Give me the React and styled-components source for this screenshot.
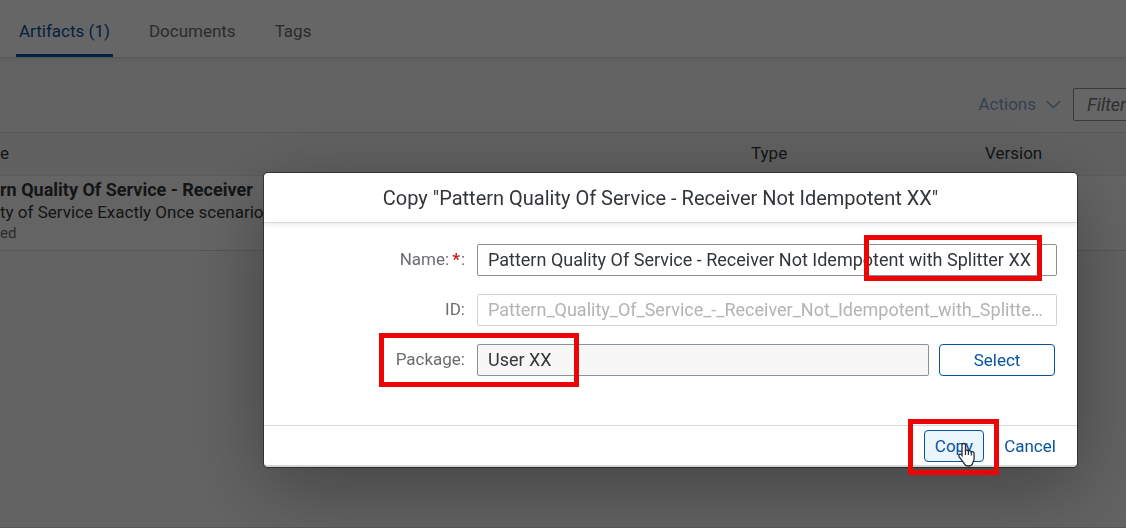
import React from "react";
import styled, { createGlobalStyle } from "styled-components";

const Global = createGlobalStyle`
  * { box-sizing: border-box; }
  html, body, #root { height: 100%; }
  body {
    margin: 0;
    overflow: hidden;
    background: #f7f7f7;
    color: #32363a;
    font-family: Roboto, "Liberation Sans", sans-serif;
    font-size: 17px;
    line-height: 22px;
  }
  input, button { font: inherit; }
`;

const Page = styled.main`
  min-height: 100%;
  overflow: hidden;
  display: flex;
  flex-direction: column;
  border-bottom: 1px solid #d9d9d9;
`;

const TabBar = styled.nav`
  display: flex;
  gap: 33px;
  padding: 0 16px;
  height: 58px;
  background: #fff;
  border-bottom: 1px solid #d9d9d9;
  box-shadow: 0 2px 4px rgba(0, 0, 0, 0.06);
`;

const Tab = styled.a`
  display: block;
  padding: 20px 3px 0;
  height: 57px;
  text-decoration: none;
  color: ${(p) => (p.$active ? "#0854a0" : "#6a6d70")};
  border-bottom: 3px solid ${(p) => (p.$active ? "#0854a0" : "transparent")};
  border-radius: 2px 2px 0 0;
`;

const Toolbar = styled.div`
  display: flex;
  justify-content: flex-end;
  align-items: center;
  height: 74px;
  padding-top: 18px;
`;

const MenuButton = styled.button`
  display: flex;
  align-items: center;
  gap: 10px;
  padding: 0;
  margin-right: 12px;
  border: 0;
  background: none;
  color: #0854a0;
  opacity: 0.5;
`;

const FilterClip = styled.div`
  width: 53px;
  height: 33px;
  overflow: hidden;
`;

const FilterInput = styled.input`
  width: 240px;
  height: 33px;
  padding: 0 13px;
  border: 1px solid #89919a;
  border-radius: 2px;
  background: #fff;
  font-size: 18px;
  &::placeholder { color: #74777a; font-style: italic; opacity: 1; }
`;

const Table = styled.table`
  width: 100%;
  table-layout: fixed;
  border-collapse: separate;
  border-spacing: 0;
  white-space: nowrap;
`;

const HeadCell = styled.th`
  width: ${(p) => p.$width};
  height: 44px;
  padding: 0 0 2px;
  text-align: left;
  font-weight: 400;
  background: #f2f2f2;
  border-top: 1px solid #d9d9d9;
  border-bottom: 1px solid #e5e5e5;
`;

const Cell = styled.td`
  height: 75px;
  padding: 0 0 4px;
  background: #fbfbfb;
  border-bottom: 1px solid #d9d9d9;
`;

const ArtifactName = styled.strong`
  display: block;
  font-size: 18px;
  font-weight: 700;
`;

const Description = styled.span`
  display: block;
`;

const Status = styled.span`
  display: block;
  font-size: 15px;
  line-height: 20px;
  color: #6a6d70;
`;

const Overlay = styled.div`
  position: fixed;
  inset: 0;
  display: flex;
  align-items: flex-start;
  padding: 173px 49px 0 264px;
  background: rgba(0, 0, 0, 0.6);
`;

const Dialog = styled.section`
  flex: 1;
  background: #fff;
  border-radius: 4px;
  border-bottom: 2px solid #d4d4d4;
  box-shadow: 0 0 0 1px rgba(0, 0, 0, 0.42), 0 20px 80px rgba(0, 0, 0, 0.35);
`;

const DialogTitle = styled.h1`
  margin: 0;
  height: 50px;
  padding: 0 20px 0 0;
  font-size: 20px;
  line-height: 50px;
  font-weight: 400;
  text-align: center;
  border-bottom: 1px solid #d9d9d9;
  box-shadow: 0 2px 4px rgba(0, 0, 0, 0.08);
`;

const Form = styled.form`
  display: flex;
  flex-direction: column;
  gap: 18px;
  padding: 21px 20px 49px 0;
`;

const Row = styled.div`
  position: relative;
  display: grid;
  grid-template-columns: 201px 1fr;
  column-gap: 12px;
`;

const Label = styled.label`
  text-align: right;
  line-height: 30px;
  color: #6a6d70;
`;

const Required = styled.span`
  color: #cc1919;
  font-weight: 700;
  padding: 0 1px 0 3px;
`;

const Field = styled.div`
  position: relative;
  display: flex;
  gap: 10px;
  padding-right: ${(p) => (p.$withButton ? "2px" : "0")};
`;

const TextInput = styled.input`
  flex: 1;
  min-width: 0;
  height: 32px;
  padding: 0 10px 2px;
  font-size: 18px;
  color: #32363a;
  background: ${(p) => (p.readOnly ? "#f7f7f7" : "#fff")};
  border: 1px solid #89919a;
  border-radius: 2px;
  text-overflow: ellipsis;
  outline: none;
  &:disabled { color: #b1b3b5; border-color: #d0d3d6; }
`;

const Footer = styled.footer`
  display: flex;
  justify-content: flex-end;
  gap: 10px;
  padding: 4px 11px 3px;
  border-top: 1px solid #d9d9d9;
`;

const Button = styled.button`
  position: relative;
  width: ${(p) => p.$width};
  height: 32px;
  padding: 0;
  color: #0854a0;
  border: 1px solid ${(p) => (p.$plain ? "transparent" : "#0854a0")};
  border-radius: 4px;
  background: ${(p) => (p.$hover ? "#ebf5fe" : "transparent")};
`;

const Highlight = styled.span`
  position: absolute;
  inset: ${(p) => p.$inset};
  width: ${(p) => p.$width};
  border: 5px solid #eb0505;
  pointer-events: none;
`;

const Pointer = styled.svg`
  position: absolute;
  left: 32px;
  top: 11px;
`;

export default function App() {
  return (
    <>
      <Global />
      <Page>
        <TabBar>
          <Tab href="#artifacts" $active>Artifacts (1)</Tab>
          <Tab href="#documents">Documents</Tab>
          <Tab href="#tags">Tags</Tab>
        </TabBar>
        <Toolbar>
          <MenuButton type="button">
            Actions
            <svg width="15" height="9" viewBox="0 0 15 9" fill="none" stroke="currentColor" strokeWidth="1.3">
              <path d="M.8 1l6.700 6.700L14.200 1" />
            </svg>
          </MenuButton>
          <FilterClip>
            <FilterInput aria-label="Filter" placeholder="Filter" />
          </FilterClip>
        </Toolbar>
        <Table>
          <thead>
            <tr>
              <HeadCell>e</HeadCell>
              <HeadCell $width="234px">Type</HeadCell>
              <HeadCell $width="141px">Version</HeadCell>
            </tr>
          </thead>
          <tbody>
            <tr>
              <Cell>
                <ArtifactName>rn Quality Of Service - Receiver</ArtifactName>
                <Description>ty of Service Exactly Once scenario</Description>
                <Status>ed</Status>
              </Cell>
              <Cell />
              <Cell />
            </tr>
          </tbody>
        </Table>
      </Page>
      <Overlay>
        <Dialog role="dialog" aria-labelledby="dialog-title">
          <DialogTitle id="dialog-title">
            Copy "Pattern Quality Of Service - Receiver Not Idempotent XX"
          </DialogTitle>
          <Form id="copy-form">
            <Row>
              <Label htmlFor="name">Name:<Required>*</Required>:</Label>
              <Field>
                <TextInput
                  id="name"
                  defaultValue="Pattern Quality Of Service - Receiver Not Idempotent with Splitter XX"
                />
                <Highlight $inset="-9px 15px -5px auto" $width="178px" />
              </Field>
            </Row>
            <Row>
              <Label htmlFor="artifact-id">ID:</Label>
              <Field>
                <TextInput
                  id="artifact-id"
                  disabled
                  defaultValue="Pattern_Quality_Of_Service_-_Receiver_Not_Idempotent_with_Splitter_XX"
                />
              </Field>
            </Row>
            <Row>
              <Label htmlFor="package">Package:</Label>
              <Field $withButton>
                <TextInput id="package" readOnly defaultValue="User XX" />
                <Button type="button" $width="116px">Select</Button>
              </Field>
              <Highlight $inset="-11px auto -11px 115px" $width="200px" />
            </Row>
          </Form>
          <Footer>
            <Button type="submit" form="copy-form" $width="60px" $hover>
              Copy
              <Highlight $inset="-12px -16px -14px -17px" />
              <Pointer width="20" height="26" viewBox="0 0 20 26">
                <path
                  d="M6.700 1.500c1.100 0 1.800.8 1.800 1.800v5.200c.5-.6 2.500-.6 2.900.5.700-.6 2.500-.3 2.900.9.900-.5 2.800 0 2.800 1.700v4.900c0 2.600-1.300 3.800-1.700 5.200-.6 1.500-2 2.300-3.900 2.300-2.100 0-3.400-.9-4.200-2.200-1.300-2.200-3.200-4.400-5.100-7-.9-1.300-.2-2.600 1-2.600.8 0 1.400.6 1.800 1.200V3.300c0-1 .7-1.800 1.700-1.800z"
                  fill="#fff"
                  stroke="#222b3c"
                  strokeWidth="1.300"
                />
                <path d="M8.500 8v5M11.400 8.800v4.200M14.300 10v3.500" stroke="#222b3c" strokeWidth="1.200" />
              </Pointer>
            </Button>
            <Button type="button" $width="72px" $plain>Cancel</Button>
          </Footer>
        </Dialog>
      </Overlay>
    </>
  );
}
